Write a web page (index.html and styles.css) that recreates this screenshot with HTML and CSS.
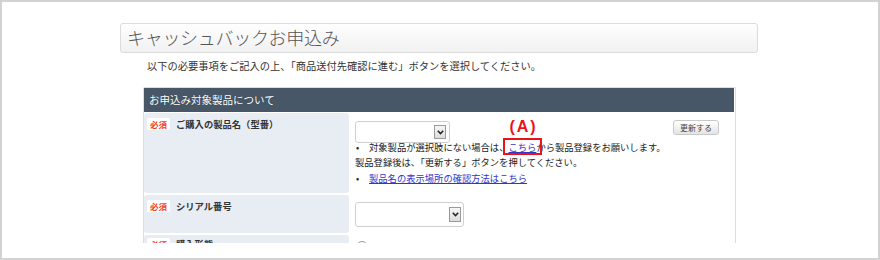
FILE: index.html
```html
<!DOCTYPE html>
<html lang="ja">
<head>
<meta charset="utf-8">
<link rel="stylesheet" href="styles.css">
</head>
<body>
<div class="frame">
  <div class="viewport">
    <div class="title">キャッシュバックお申込み</div>
    <p class="lead">以下の必要事項をご記入の上、「商品送付先確認に進む」ボタンを選択してください。</p>
    <div class="table">
      <div class="head">お申込み対象製品について</div>
      <div class="row row1">
        <div class="lcell"><span class="badge">必須</span><span class="label">ご購入の製品名（型番）</span></div>
        <div class="rcell">
          <div class="topline">
            <div class="select s1"><span class="arrow"><svg width="7" height="5" viewBox="0 0 7 5"><path d="M0.8 0.8 L3.5 3.6 L6.2 0.8" fill="none" stroke="#222" stroke-width="1.5"/></svg></span></div>
            <button class="btn">更新する</button>
          </div>
          <div class="notes">
            <div class="li"><span class="dot">•</span><span>対象製品が選択肢にない場合は、<span class="marked"><a href="#" class="link">こちら</a><span class="anno">(A)</span></span>から製品登録をお願いします。</span></div>
            <div class="plain">製品登録後は、「更新する」ボタンを押してください。</div>
            <div class="li"><span class="dot">•</span><a href="#" class="link">製品名の表示場所の確認方法はこちら</a></div>
          </div>
        </div>
      </div>
      <div class="row row2">
        <div class="lcell"><span class="badge">必須</span><span class="label">シリアル番号</span></div>
        <div class="rcell">
          <div class="select s2"><span class="arrow"><svg width="7" height="5" viewBox="0 0 7 5"><path d="M0.8 0.8 L3.5 3.6 L6.2 0.8" fill="none" stroke="#222" stroke-width="1.5"/></svg></span></div>
        </div>
      </div>
      <div class="row row3">
        <div class="lcell"><span class="badge">必須</span><span class="label">購入形態</span></div>
        <div class="rcell"><span class="radio"></span></div>
      </div>
    </div>
  </div>
</div>
</body>
</html>
```
FILE: styles.css
```css
html, body {
  margin: 0;
  padding: 0;
  background: #fff;
}
body {
  font-family: "Noto Sans CJK JP", "Noto Sans", sans-serif;
  color: #333;
}
.frame {
  width: 880px;
  height: 260px;
  box-sizing: border-box;
  border: 2px solid #d2d2d2;
  background: #fff;
}
.viewport {
  height: 241px;
  overflow: hidden;
}
.title {
  margin: 21px 0 0 118px;
  width: 638px;
  height: 30px;
  box-sizing: border-box;
  border: 1px solid #dcdcdc;
  border-radius: 3px;
  background: linear-gradient(#ffffff, #f1f1f1);
  padding-left: 6px;
  font-size: 18px;
  line-height: 27px;
  color: #555;
  font-weight: 300;
  letter-spacing: -0.3px;
}
.lead {
  margin: 6px 0 0 145px;
  font-size: 10.25px;
  line-height: 14px;
  color: #333;
}
.table {
  margin: 14px 0 0 141px;
  width: 593px;
  box-sizing: border-box;
  border: 1px solid #dcdcdc;
  border-bottom: none;
  border-radius: 2px 2px 0 0;
}
.head {
  height: 24px;
  margin-right: 1px;
  background: #475767;
  color: #fff;
  font-size: 10.5px;
  line-height: 24px;
  padding-left: 5px;
  text-shadow: 0 0 1px rgba(0,0,0,0.4);
}
.row {
  display: grid;
  grid-template-columns: 205px 1fr;
  column-gap: 1px;
  margin-top: 2px;
}
.row1 { margin-top: 1px; height: 80px; }
.row2 { height: 38px; }
.row3 { height: 40px; }
.lcell {
  background: #e8edf4;
  border-radius: 3px;
  padding: 5px 3px;
  display: flex;
  align-items: flex-start;
}
.row3 .lcell { padding-top: 3px; }
.badge {
  display: inline-block;
  width: 23px;
  height: 12px;
  background: #fff;
  border-radius: 2px;
  color: #f0401c;
  font-size: 8.5px;
  font-weight: bold;
  line-height: 12px;
  text-align: center;
}
.label {
  margin-left: 6px;
  font-size: 9.3px;
  font-weight: bold;
  line-height: 12px;
  color: #333;
}
.rcell {
  padding: 8px 16px 0 5px;
  font-size: 9.3px;
  color: #222;
}
.row2 .rcell { padding-top: 7px; }
.row3 .rcell { padding-top: 6px; }
.topline {
  display: flex;
  justify-content: space-between;
  align-items: flex-start;
}
.select {
  box-sizing: border-box;
  border: 1px solid #cfcfcf;
  border-radius: 3px;
  background: #fff;
  display: flex;
  justify-content: flex-end;
  align-items: center;
}
.s1 { width: 95px; height: 22px; padding-right: 3px; }
.s2 { width: 109px; height: 25px; padding-right: 2px; }
.arrow {
  box-sizing: border-box;
  width: 12px;
  height: 14px;
  border: 1px solid #9a9a9a;
  background: linear-gradient(#f6f6f6, #dcdcdc);
  display: flex;
  justify-content: center;
  align-items: center;
}
.s2 .arrow { height: 15px; }
.btn {
  margin-top: -1px;
  width: 46px;
  height: 15px;
  box-sizing: border-box;
  padding: 0;
  border: 1px solid #c9c9c9;
  border-radius: 3px;
  background: linear-gradient(#ffffff, #e4e4e4);
  font-family: "Noto Sans CJK JP", sans-serif;
  font-size: 8px;
  line-height: 13px;
  color: #444;
}
.notes {
  margin-top: -3.5px;
  line-height: 15.5px;
}
.li {
  display: flex;
}
.dot {
  width: 14px;
  padding-left: 1px;
  box-sizing: border-box;
}
.link {
  color: #3535c8;
  text-decoration: underline;
}
.marked {
  position: relative;
}
.marked::after {
  content: "";
  position: absolute;
  left: -5px;
  right: -6px;
  top: -2px;
  height: 17px;
  border: 2px solid #e8141a;
  box-sizing: border-box;
}
.anno {
  position: absolute;
  left: 1px;
  top: -21px;
  font-family: "Liberation Sans", sans-serif;
  font-weight: bold;
  font-size: 16px;
  line-height: 16px;
  letter-spacing: 2px;
  color: #e8141a;
  white-space: nowrap;
}
.radio {
  display: inline-block;
  width: 10px;
  height: 10px;
  border: 1px solid #999;
  border-radius: 50%;
  margin-left: 1px;
}
```
